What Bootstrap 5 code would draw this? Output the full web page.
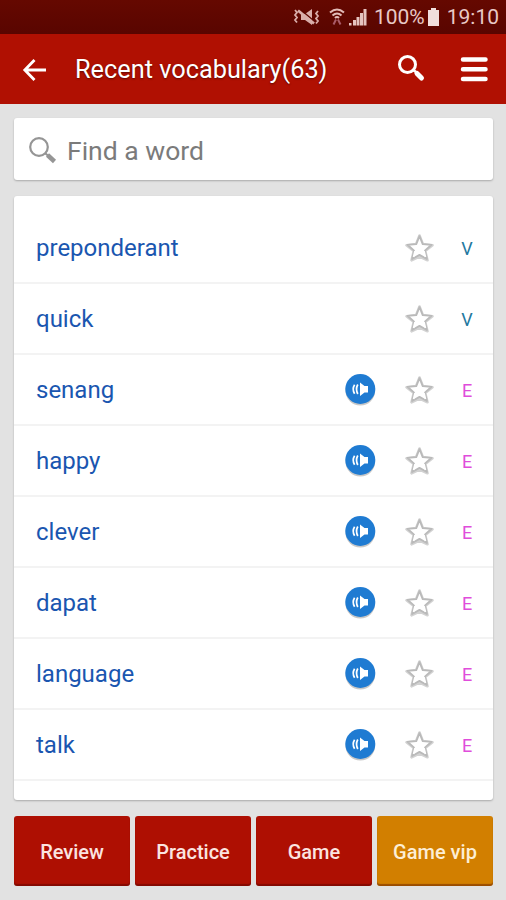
<!DOCTYPE html>
<html lang="en">
<head>
<meta charset="utf-8">
<meta name="viewport" content="width=device-width, initial-scale=1">
<title>Recent vocabulary</title>
<link href="https://cdn.jsdelivr.net/npm/bootstrap@5.3.0/dist/css/bootstrap.min.css" rel="stylesheet">
<style>
body{font-family:Roboto,"Liberation Sans",sans-serif;background:#e2e2e2;height:900px;overflow:hidden}
svg{display:block;flex:none;overflow:visible}
.status{height:34px;background:linear-gradient(#650800,#590500);color:#e8c9c6;font-size:21px;line-height:34px;padding-right:7px}
.status .pct{margin-left:7px;margin-right:2px}
.status .clock{margin-left:7px}
.appbar{height:70px;background:#b01002;padding:2px 18px 0 22px}
.appbar h1{font-size:25.3px;line-height:68px;margin-left:28px;text-shadow:0 1px 2px rgba(0,0,0,.45)}
.appbar .menu{margin-left:35px}
.panel{border:0;border-radius:3px;box-shadow:0 1px 2px rgba(0,0,0,.25)}
.find{height:62px;margin:14px 13px 0 14px;padding-left:14px}
.find input{font-size:26.5px;color:#757575;padding:2px 0 0;margin-left:11px;line-height:1}
.find input::placeholder{color:#7b7b7b;opacity:1}
.words{height:604px;margin:16px 13px 0 14px;padding-top:17px}
.word{height:71px;border-bottom:2px solid #f3f3f3;padding:1px 18px 0 22px;color:#1a56b0;font-size:24px}
.lang{width:16px;font-size:18px;margin-left:24px;text-align:center;padding-top:1px}
.lang-v{color:#24799f}
.lang-e{color:#e04ddb}
.star{margin-left:27px}
.actions{margin:16px 13px 0 14px;gap:5px}
.actions .btn{height:70px;border:0;border-radius:3px;flex:1 1 0;padding:2px 0 0;font-size:20px;font-weight:500;color:#fbe4e0;background:#ae0f02;box-shadow:inset 0 -2px 1px rgba(70,0,0,.4)}
.actions .vip{background:#d27f00;color:#fdeed5}
</style>
<script src="https://cdn.jsdelivr.net/npm/bootstrap@5.3.0/dist/js/bootstrap.bundle.min.js"></script>
</head>
<body>
<svg class="d-none">
  <symbol id="star" viewBox="0 0 32 32">
    <path d="M16.500 3.500 19.800 12 29.500 13.300 22.200 19 24.500 28.300 16.500 24.500 8.500 28.300 10.800 19 3.500 13.300 13.200 12Z" fill="none" stroke="#d2d2d2" stroke-width="2.600" stroke-linejoin="round"/>
    <path d="M16.500 4.200 19.700 12.100 28.500 12.800 21.900 18.600 23.900 27 16.500 22.900 9.100 27 11.100 18.600 4.500 12.800 13.300 12.100Z" fill="#fff" stroke="#bababa" stroke-width="1.800" stroke-linejoin="round"/>
    <path d="M12 19 10.500 25M21 19 22.500 25" stroke="#fff" stroke-width="1.600"/>
  </symbol>
  <symbol id="sound" viewBox="0 0 32 34">
    <circle cx="16.300" cy="17.8" r="14.8" fill="#000" opacity=".22"/>
    <circle cx="16.300" cy="16" r="15" fill="#1f7bd2"/>
    <path d="M16 9.500 20.500 13H24V19.500H20.500L16 23Z" fill="#fff"/>
    <path d="M13.800 11.500Q11.200 16.200 13.800 21M10.600 11.800Q7.800 16.200 10.600 20.700" fill="none" stroke="#fff" stroke-width="1.700"/>
  </symbol>
</svg>

<div class="status d-flex align-items-center justify-content-end">
  <svg width="28" height="18" viewBox="0 0 28 18" fill="none" stroke="#d9aeaa" stroke-width="1.800"><path d="M2 2l2 2.500L2 7l2 2.500L2 12l2 2.500M25 3l-2 2.500L25 8l-2 2.500 2 2.500-2 2.500"/><path d="M8 6h4l7-5v16l-7-5H8Z" fill="#d9aeaa" stroke="none"/><path d="M8 2l13 11" stroke="#5d0600" stroke-width="1.500"/><path d="M5 2.500l16 13" stroke-width="2.800"/></svg>
  <svg class="ms-2" width="16" height="18" viewBox="0 0 16 18" fill="none" stroke="#e2bcb8" stroke-width="2"><path d="M1 4.500Q8-1.500 15 4.500M3.500 7.500Q8 3.500 12.500 7.500M6 10Q8 8 10 10"/><path d="M4.500 16.500l2.500-5M11.500 16.500l-2.500-5" stroke="#a85b68" stroke-width="2"/></svg>
  <svg class="ms-1" width="18" height="18" viewBox="0 0 18 18" fill="#e5c3bf"><path d="M0 15h2.500v2.500H0zM4 12h3v5.500H4zM7.500 9h3v8.500h-3zM11 5h3v12.500h-3zM14.500 1h3v16.500h-3z"/></svg>
  <span class="pct">100%</span>
  <svg width="13" height="18" viewBox="0 0 13 18" fill="#f0dedc"><path d="M4 0h5v2h3v16H1V2h3Z"/></svg>
  <span class="clock">19:10</span>
</div>

<header class="appbar d-flex align-items-center">
  <svg width="25" height="24" viewBox="0 0 25 24" fill="none" stroke="#fff" stroke-width="2.800"><path d="M12.500 2 2.800 12 12.500 22M3 12H24"/></svg>
  <h1 class="mb-0 fw-normal text-white flex-grow-1">Recent vocabulary(63)</h1>
  <svg width="28" height="28" viewBox="0 0 28 28" fill="none" stroke="#fff"><circle cx="10.500" cy="8.500" r="8" stroke-width="3"/><path d="M16.500 14 20 17" stroke-width="2.800"/><path d="M20 17.500 24.500 22" stroke-width="5" stroke-linecap="round"/></svg>
  <svg class="menu" width="28" height="28" viewBox="0 0 28 28"><path d="M3 3.500H25.500M3 13.300H25.500M3 23.100H25.500" stroke="#fff" stroke-width="4.500" stroke-linecap="round"/></svg>
</header>

<main>
  <div class="panel find bg-white d-flex align-items-center">
    <svg width="28" height="28" viewBox="0 0 28 28" fill="none" stroke="#959595"><circle cx="11" cy="12" r="8.800" stroke-width="2.200"/><path d="M17.500 18.500 20.500 21" stroke-width="2.200"/><path d="M19.500 20 26.500 26.500" stroke-width="4.500"/></svg>
    <input class="border-0 bg-transparent flex-grow-1" type="text" placeholder="Find a word" aria-label="Find a word">
  </div>

  <div class="panel words bg-white">
    <div class="word d-flex align-items-center"><span class="flex-grow-1">preponderant</span><svg class="star" width="32" height="32"><use href="#star"/></svg><span class="lang lang-v">V</span></div>
    <div class="word d-flex align-items-center"><span class="flex-grow-1">quick</span><svg class="star" width="32" height="32"><use href="#star"/></svg><span class="lang lang-v">V</span></div>
    <div class="word d-flex align-items-center"><span class="flex-grow-1">senang</span><svg width="32" height="34"><use href="#sound"/></svg><svg class="star" width="32" height="32"><use href="#star"/></svg><span class="lang lang-e">E</span></div>
    <div class="word d-flex align-items-center"><span class="flex-grow-1">happy</span><svg width="32" height="34"><use href="#sound"/></svg><svg class="star" width="32" height="32"><use href="#star"/></svg><span class="lang lang-e">E</span></div>
    <div class="word d-flex align-items-center"><span class="flex-grow-1">clever</span><svg width="32" height="34"><use href="#sound"/></svg><svg class="star" width="32" height="32"><use href="#star"/></svg><span class="lang lang-e">E</span></div>
    <div class="word d-flex align-items-center"><span class="flex-grow-1">dapat</span><svg width="32" height="34"><use href="#sound"/></svg><svg class="star" width="32" height="32"><use href="#star"/></svg><span class="lang lang-e">E</span></div>
    <div class="word d-flex align-items-center"><span class="flex-grow-1">language</span><svg width="32" height="34"><use href="#sound"/></svg><svg class="star" width="32" height="32"><use href="#star"/></svg><span class="lang lang-e">E</span></div>
    <div class="word d-flex align-items-center"><span class="flex-grow-1">talk</span><svg width="32" height="34"><use href="#sound"/></svg><svg class="star" width="32" height="32"><use href="#star"/></svg><span class="lang lang-e">E</span></div>
  </div>

  <div class="actions d-flex">
    <button class="btn" type="button">Review</button>
    <button class="btn" type="button">Practice</button>
    <button class="btn" type="button">Game</button>
    <button class="btn vip" type="button">Game vip</button>
  </div>
</main>
</body>
</html>
